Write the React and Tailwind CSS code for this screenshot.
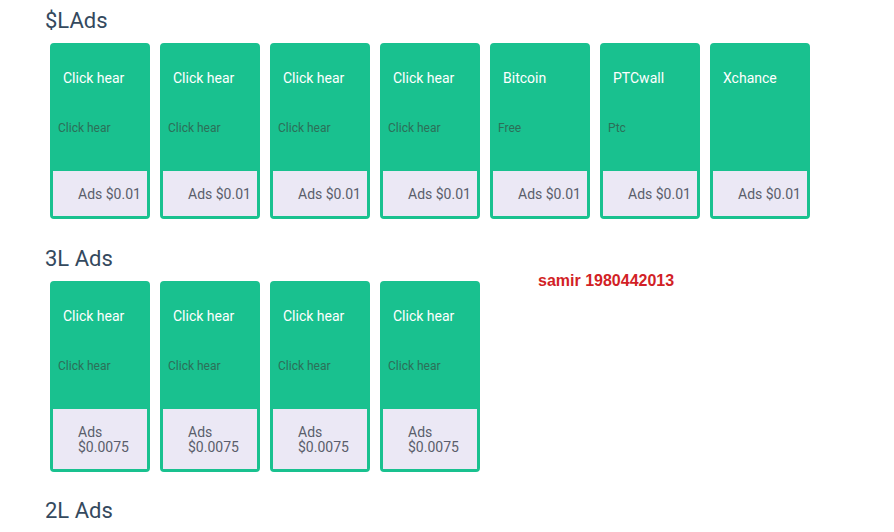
const rowOne = [
  { title: "Click hear", sub: "Click hear", price: "Ads $0.01" },
  { title: "Click hear", sub: "Click hear", price: "Ads $0.01" },
  { title: "Click hear", sub: "Click hear", price: "Ads $0.01" },
  { title: "Click hear", sub: "Click hear", price: "Ads $0.01" },
  { title: "Bitcoin", sub: "Free", price: "Ads $0.01" },
  { title: "PTCwall", sub: "Ptc", price: "Ads $0.01" },
  { title: "Xchance", sub: "", price: "Ads $0.01" },
];

const rowTwo = [
  { title: "Click hear", sub: "Click hear", price: "Ads $0.0075" },
  { title: "Click hear", sub: "Click hear", price: "Ads $0.0075" },
  { title: "Click hear", sub: "Click hear", price: "Ads $0.0075" },
  { title: "Click hear", sub: "Click hear", price: "Ads $0.0075" },
];

const AdCard = ({ ad }) => (
  <div className="mx-[5px] w-[100px] shrink-0 rounded-[4px] border-[3px] border-[#19c18f] bg-[#19c18f] flex flex-col">
    <div className="h-[125px]">
      <p className="pt-[24px] px-[10px] text-[14px] leading-[16px] text-white">
        {ad.title}
      </p>
      <p className="mt-[35px] px-[5px] text-[12px] leading-[14px] text-[#2c6f58]">
        {ad.sub}
      </p>
    </div>
    <div className="bg-[#ebe8f5] pt-[16px] pb-[14px] pl-[25px] pr-0 text-[14px] leading-[15px] text-[#5a5e6b]">
      {ad.price}
    </div>
  </div>
);

const App = () => {
  return (
    <div className="min-h-screen bg-white pl-[45px] pt-[8px] font-['Roboto',sans-serif]">
      <h2 className="text-[22px] leading-[26px] text-[#34495e] mb-[9px]">
        $LAds
      </h2>
      <div className="flex">
        {rowOne.map((ad, i) => (
          <AdCard key={i} ad={ad} />
        ))}
      </div>

      <h2 className="mt-[27px] text-[22px] leading-[26px] text-[#34495e] mb-[9px]">
        3L Ads
      </h2>
      <div className="flex items-start">
        {rowTwo.map((ad, i) => (
          <AdCard key={i} ad={ad} />
        ))}
        <p className="ml-[53px] -mt-[9px] font-['Liberation_Sans',Arial,sans-serif] font-bold text-[16px] leading-[18px] text-[#d21f26]">
          samir 1980442013
        </p>
      </div>

      <h2 className="mt-[26px] text-[22px] leading-[26px] text-[#34495e]">
        2L Ads
      </h2>
    </div>
  );
};

export default App;
